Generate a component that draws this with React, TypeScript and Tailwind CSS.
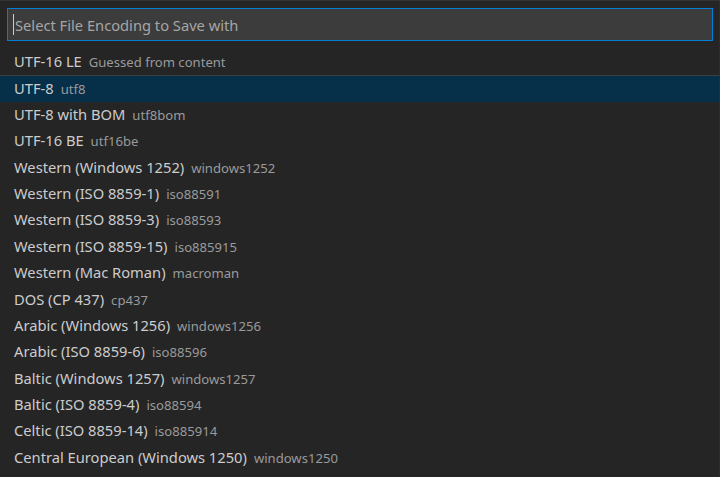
import React from "react";

const items: [string, string][] = [
  ["UTF-16 LE", "Guessed from content"],
  ["UTF-8", "utf8"],
  ["UTF-8 with BOM", "utf8bom"],
  ["UTF-16 BE", "utf16be"],
  ["Western (Windows 1252)", "windows1252"],
  ["Western (ISO 8859-1)", "iso88591"],
  ["Western (ISO 8859-3)", "iso88593"],
  ["Western (ISO 8859-15)", "iso885915"],
  ["Western (Mac Roman)", "macroman"],
  ["DOS (CP 437)", "cp437"],
  ["Arabic (Windows 1256)", "windows1256"],
  ["Arabic (ISO 8859-6)", "iso88596"],
  ["Baltic (Windows 1257)", "windows1257"],
  ["Baltic (ISO 8859-4)", "iso88594"],
  ["Celtic (ISO 8859-14)", "iso885914"],
  ["Central European (Windows 1250)", "windows1250"],
];

export default function App() {
  return (
    <div
      className="w-[720px] h-[477px] overflow-hidden bg-[#252526] border-t border-[#333333] border-r border-r-[#2d2d2d]"
      style={{ fontFamily: '"Noto Sans", "Open Sans", sans-serif' }}
    >
      <div className="pt-[7px] pl-[7px] pr-[6px]">
        <div className="h-[33px] border border-[#007fd4] bg-[#3c3c3c] flex items-center pl-[5px]">
          <div className="w-px h-[21px] bg-[#cccccc] mr-[1px]" />
          <span className="text-[14.7px] text-[#a6a6a6] leading-none mt-[1px]">
            Select File Encoding to Save with
          </span>
        </div>
      </div>
      <div className="mt-[8px]">
        {items.map(([label, desc], i) => (
          <div
            key={label}
            className={
              "h-[26.4px] leading-[25.4px] flex items-baseline pl-[14px] whitespace-nowrap " +
              (i === 1 ? "bg-[#062f4a] border-t border-[#3f3f46]" : "")
            }
          >
            <span className="text-[14.7px] text-[#cccccc]">{label}</span>
            <span className="text-[13.1px] text-[#9a9a9a] ml-[7px]">{desc}</span>
          </div>
        ))}
      </div>
    </div>
  );
}
